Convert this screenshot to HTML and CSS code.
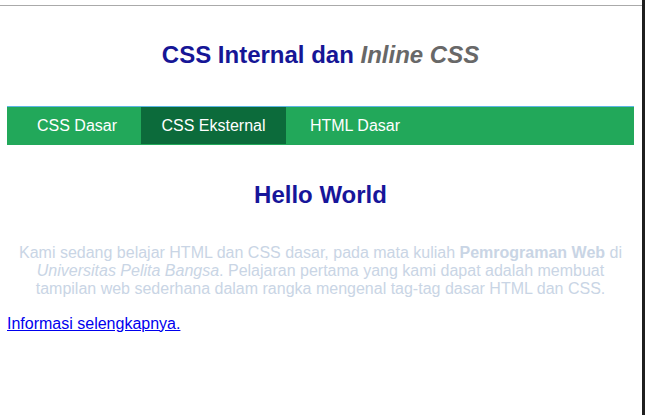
FILE: index.html
```html
<!DOCTYPE html>
<html lang="id">
<head>
<meta charset="utf-8">
<title>CSS Internal dan Inline CSS</title>
<link rel="stylesheet" href="styles.css">
</head>
<body>
<div class="page">
  <div class="topline"></div>
  <div class="content">
    <h1 class="title">CSS Internal dan <em class="title-em">Inline CSS</em></h1>
    <nav class="nav">
      <a class="nav-item" href="#">CSS Dasar</a>
      <a class="nav-item active" href="#">CSS Eksternal</a>
      <a class="nav-item" href="#">HTML Dasar</a>
    </nav>
    <h2 class="hello">Hello World</h2>
    <p class="intro">Kami sedang belajar HTML dan CSS dasar, pada mata kuliah <b>Pemrograman Web</b> di <i>Universitas Pelita Bangsa</i>. Pelajaran pertama yang kami dapat adalah membuat tampilan web sederhana dalam rangka mengenal tag-tag dasar HTML dan CSS.</p>
    <a class="more" href="#">Informasi selengkapnya.</a>
  </div>
</div>
<div class="edge"></div>
</body>
</html>
```
FILE: styles.css
```css
html, body {
  margin: 0;
  padding: 0;
  height: 100%;
}
body {
  display: flex;
  background: #ffffff;
  font-family: "Liberation Sans", Arial, sans-serif;
  font-size: 16px;
}
.page {
  flex: 1;
  min-width: 0;
}
.edge {
  width: 3px;
  flex: none;
  background: #1f1f1f;
}
.topline {
  margin-top: 5px;
  height: 1px;
  background: #aaaaaa;
}
.content {
  padding: 0 8px 0 7px;
}
.title {
  margin: 35px 0 0;
  font-size: 24px;
  line-height: 28px;
  font-weight: bold;
  text-align: center;
  color: #161696;
}
.title-em {
  font-style: italic;
  color: #686868;
}
.nav {
  margin-top: 37px;
  border-top: 1px solid #5cb6e4;
  background: #22a85a;
  display: flex;
  gap: 4.45px;
  padding: 0 0 1px 10px;
}
.nav-item {
  display: block;
  padding: 9.5px 20px;
  line-height: 18px;
  color: #ffffff;
  text-decoration: none;
}
.nav-item.active {
  background: #0c6b3b;
}
.hello {
  margin: 36px 0 0;
  font-size: 24px;
  line-height: 28px;
  font-weight: bold;
  text-align: center;
  color: #17159a;
}
.intro {
  margin: 34.5px 0 0;
  line-height: 18px;
  text-align: center;
  color: #c9d5e5;
}
.more {
  display: inline-block;
  margin-top: 17px;
  line-height: 18px;
  color: #0000ee;
  text-decoration: underline;
}
```
